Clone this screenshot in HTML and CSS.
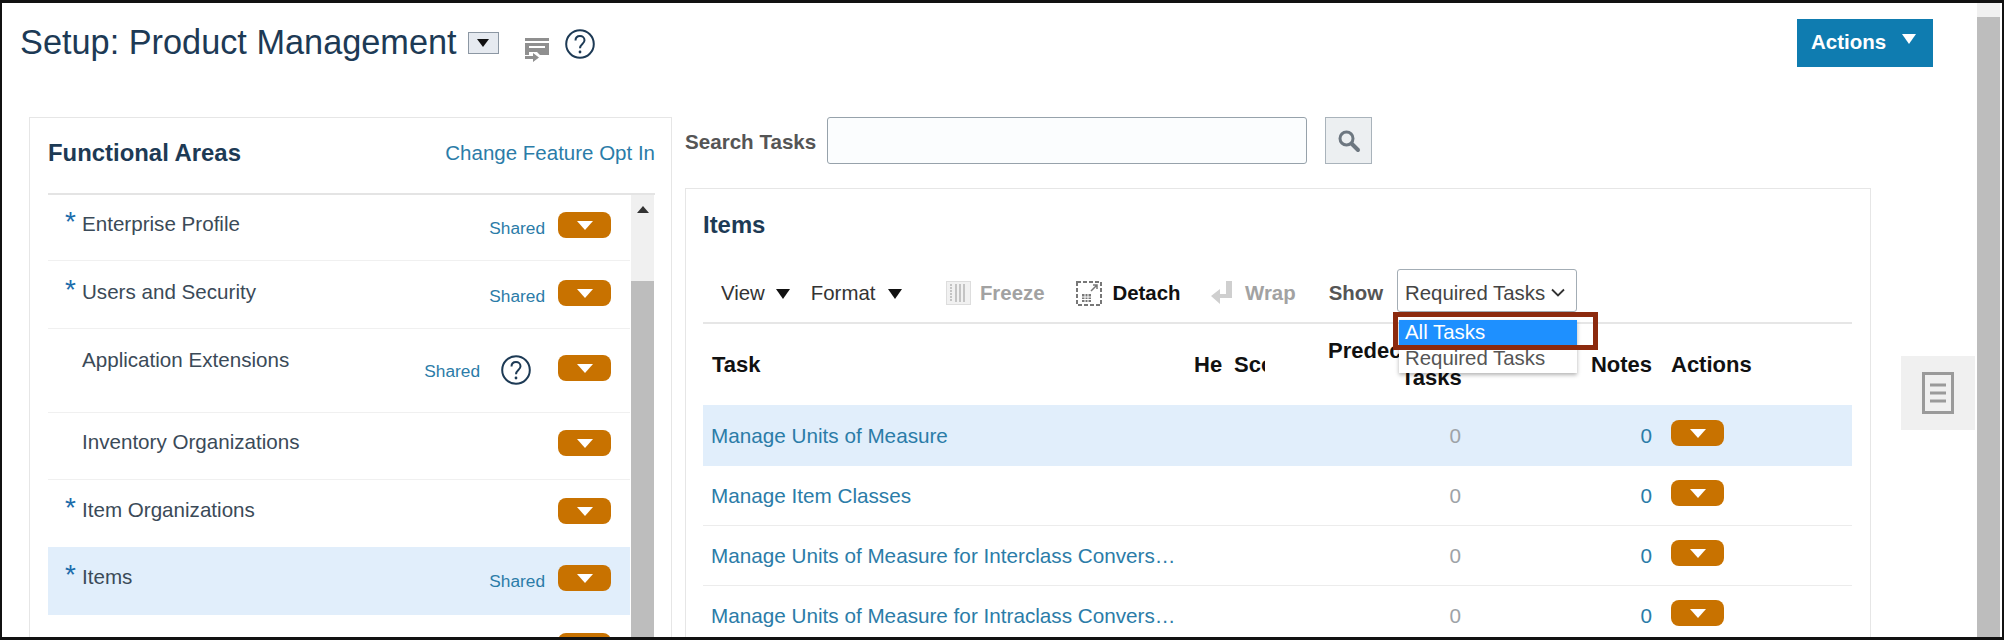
FILE: index.html
```html
<!DOCTYPE html>
<html lang="en">
<head>
<meta charset="utf-8">
<title>Setup: Product Management</title>
<link rel="stylesheet" href="styles.css">
</head>
<body>
<div class="frame">
  <div class="main">
    <header class="page-head">
      <h1 class="page-title">Setup: Product Management</h1>
      <span class="title-drop"><i class="tri tri-black-sm"></i></span>
      <svg class="tray-icon" width="26" height="24" viewBox="0 0 26 24"><path fill="#8f8f8f" d="M1 0h24v3H1zM1 5h24v12h-9l-3-3H5v3H1z"/><path fill="#fff" d="M5 8h16v2H5z"/><path fill="#8f8f8f" d="M1 18h8v-3l6 4.500-6 4.500v-3H1z"/></svg>
      <svg class="help-icon" width="30" height="30" viewBox="0 0 30 30"><circle cx="15" cy="15" r="13.800" fill="none" stroke="#1d3a55" stroke-width="2"/><path fill="none" stroke="#1d3a55" stroke-width="2" d="M10.500 11.500c0-3 2-4.500 4.500-4.500s4.500 1.700 4.500 4.300c0 3.700-4.500 3.700-4.500 8"/><circle cx="15" cy="23" r="1.400" fill="#1d3a55"/></svg>
      <button class="actions-btn">Actions<i class="tri tri-white"></i></button>
    </header>
    <div class="content">
      <section class="areas">
        <div class="areas-head">
          <h2 class="panel-title">Functional Areas</h2>
          <a class="link opt-in">Change Feature Opt In</a>
        </div>
        <div class="areas-body">
          <div class="area-list">
            <div class="area r1"><span class="star">*</span><span class="area-name">Enterprise Profile</span><span class="shared">Shared</span><span class="menu-btn"></span></div>
            <div class="area r2"><span class="star">*</span><span class="area-name">Users and Security</span><span class="shared">Shared</span><span class="menu-btn"></span></div>
            <div class="area r3"><span class="star"></span><span class="area-name">Application Extensions</span><span class="shared">Shared</span>
              <svg class="row-help" width="30" height="30" viewBox="0 0 30 30"><circle cx="15" cy="15" r="13.800" fill="none" stroke="#1d3a55" stroke-width="2"/><path fill="none" stroke="#1d3a55" stroke-width="2" d="M10.500 11.500c0-3 2-4.500 4.500-4.500s4.500 1.700 4.500 4.300c0 3.700-4.500 3.700-4.500 8"/><circle cx="15" cy="23" r="1.400" fill="#1d3a55"/></svg>
              <span class="menu-btn"></span></div>
            <div class="area r4"><span class="star"></span><span class="area-name">Inventory Organizations</span><span class="menu-btn"></span></div>
            <div class="area r5"><span class="star">*</span><span class="area-name">Item Organizations</span><span class="menu-btn"></span></div>
            <div class="area r6 selected"><span class="star">*</span><span class="area-name">Items</span><span class="shared">Shared</span><span class="menu-btn"></span></div>
            <div class="area r7"><span class="star"></span><span class="area-name">Catalogs</span><span class="menu-btn"></span></div>
          </div>
          <div class="list-scroll"><i class="tri tri-up"></i><div class="list-thumb"></div></div>
        </div>
      </section>

      <section class="tasks">
        <div class="search-row">
          <label class="search-label">Search Tasks</label>
          <span class="search-input"></span>
          <button class="search-btn">
            <svg width="24" height="24" viewBox="0 0 24 24"><circle cx="9.500" cy="9.500" r="6.500" fill="none" stroke="#6d7780" stroke-width="3"/><path stroke="#6d7780" stroke-width="4" stroke-linecap="round" d="M15 15l6 6"/></svg>
          </button>
        </div>
        <div class="items">
          <h2 class="panel-title items-title">Items</h2>
          <div class="toolbar">
            <span class="tb-view">View</span><i class="tri tri-black tb-t1"></i>
            <span class="tb-format">Format</span><i class="tri tri-black tb-t2"></i>
            <svg class="tb-freeze" width="25" height="24" viewBox="0 0 25 24"><rect x=".5" y=".5" width="24" height="23" fill="#f1f1f1" stroke="#ddd"/><path stroke="#c4c4c4" stroke-width="2" stroke-dasharray="2 1" d="M5 3v18"/><path stroke="#c4c4c4" stroke-width="2" d="M10 3v18M14 3v18M18 3v18"/></svg>
            <span class="tb-label off tb-freeze-label">Freeze</span>
            <svg class="tb-detach" width="26" height="25" viewBox="0 0 26 25"><rect x="1" y="1" width="24" height="23" fill="none" stroke="#777" stroke-width="2" stroke-dasharray="4 2"/><path fill="none" stroke="#777" stroke-width="1.500" d="M15 10l6-6M17 4h4v4"/><path fill="#777" d="M6 13h9v8H6z"/><path stroke="#fff" d="M6 16h9M6 18.500h9M9 13v8M12 13v8"/></svg>
            <span class="tb-label on">Detach</span>
            <svg class="tb-wrap" width="21" height="24" viewBox="0 0 21 24"><path fill="#cfcfcf" d="M15 0h6v17H9v6L0 15l9-7v5h6z"/></svg>
            <span class="tb-label off tb-wrap-label">Wrap</span>
            <span class="show-label">Show</span>
            <div class="show-select">
              <span class="show-value">Required Tasks</span>
              <svg class="chevron" width="16" height="10" viewBox="0 0 16 10"><path fill="none" stroke="#333" stroke-width="1.800" d="M2 1.500l6 6 6-6"/></svg>
              <ul class="show-menu">
                <li class="opt opt-active">All Tasks</li>
                <li class="opt">Required Tasks</li>
              </ul>
              <span class="callout"></span>
            </div>
          </div>
          <div class="grid grid-head">
            <div class="th th-task">Task</div>
            <div class="th th-he">He</div>
            <div class="th th-sc">Scope</div>
            <div class="th th-pred"><span>Predecessor</span><span class="th-pred2">Tasks</span></div>
            <div class="th th-notes">Notes</div>
            <div class="th">Actions</div>
          </div>
          <div class="grid row selected">
            <a class="link cell-task">Manage Units of Measure</a><span></span><span></span><span class="num">0</span><a class="link num">0</a><span class="menu-btn"></span>
          </div>
          <div class="grid row">
            <a class="link cell-task">Manage Item Classes</a><span></span><span></span><span class="num">0</span><a class="link num">0</a><span class="menu-btn"></span>
          </div>
          <div class="grid row">
            <a class="link cell-task">Manage Units of Measure for Interclass Conversions</a><span></span><span></span><span class="num">0</span><a class="link num">0</a><span class="menu-btn"></span>
          </div>
          <div class="grid row">
            <a class="link cell-task">Manage Units of Measure for Intraclass Conversions</a><span></span><span></span><span class="num">0</span><a class="link num">0</a><span class="menu-btn"></span>
          </div>
        </div>
      </section>

      <aside class="side-handle">
        <svg width="32" height="42" viewBox="0 0 32 42"><rect x="1.500" y="1.500" width="29" height="39" fill="none" stroke="#9a9a9a" stroke-width="3"/><path stroke="#9a9a9a" stroke-width="3" d="M8 13h16M8 21h16M8 29h16"/></svg>
      </aside>
    </div>
  </div>
  <div class="page-scroll"><div class="page-thumb"></div></div>
</div>
</body>
</html>
```

FILE: styles.css
```css
* { box-sizing: border-box; }
html, body { margin: 0; padding: 0; background: #fff; }
body { font-family: "Liberation Sans", Arial, sans-serif; color: #3b4a58; overflow: hidden; }
h1, h2, ul { margin: 0; padding: 0; }
i { display: block; }
button { font-family: inherit; padding: 0; }

.frame {
  width: 2004px; height: 640px; overflow: hidden;
  display: flex;
  border-style: solid; border-color: #111;
  border-width: 3px 2px;
  padding-right: 2px;
}
.main { width: 1975px; flex: none; }

.tri { width: 0; height: 0; border-style: solid; border-color: transparent; }
.tri-white { border-width: 10px 7.500px 0; border-top-color: #fff; }
.tri-black { border-width: 10px 7.500px 0; border-top-color: #111; }
.tri-black-sm { border-width: 8px 6px 0; border-top-color: #111; }
.tri-up { border-width: 0 6px 7px; border-bottom-color: #333; margin: 11px auto 0; }

.page-head { height: 114px; display: flex; align-items: flex-start; padding-left: 18px; }
.page-title { font-weight: 400; font-size: 34.300px; line-height: 40px; color: #1d3a55; margin-top: 19px; white-space: nowrap; }
.title-drop {
  width: 31px; height: 22px; margin: 29px 0 0 11px;
  background: #e6eaf0; border: 1px solid #8c97a3;
  display: flex; align-items: center; justify-content: center;
}
.tray-icon { margin: 35px 0 0 25px; }
.help-icon { margin: 26px 0 0 15px; }
.actions-btn {
  margin: 16px 0 0 auto; margin-right: 44px;
  width: 136px; height: 48px;
  background: #0f7cb0; border: 0; color: #fff;
  font-size: 20.500px; font-weight: 700;
  display: flex; align-items: center; padding: 0 0 3px 14px;
}
.actions-btn .tri { margin: -6px 0 0 16px; }

.content { display: flex; align-items: flex-start; padding-left: 27px; }

.areas { width: 643px; height: 530px; flex: none; border: 1px solid #e6e6e6; padding: 0 16px 0 18px; }
.areas-head { height: 75px; display: flex; justify-content: space-between; align-items: flex-start; padding-top: 20px; }
.panel-title { font-size: 23.900px; font-weight: 700; line-height: 30px; color: #1d3a55; }
.link { color: #2b7ca8; }
.opt-in { font-size: 20.500px; line-height: 30px; }

.areas-body { display: flex; height: 450px; border-top: 2px solid #e4e4e4; }
.area-list { width: 582px; flex: none; }
.area { display: flex; align-items: flex-start; border-bottom: 1px solid #f0f0f0; padding-right: 19px; }
.r1 { height: 66px; padding-top: 17px; }
.r2 { height: 68px; padding-top: 19px; }
.r3 { height: 84px; padding-top: 19px; }
.r4 { height: 67px; padding-top: 17px; }
.r5 { height: 67px; padding-top: 18px; border-bottom: 0; }
.r6 { height: 68px; padding-top: 18px; border-bottom: 0; }
.r7 { height: 68px; padding-top: 18px; border-bottom: 0; }
.r3 .menu-btn { margin-top: 7px; }
.r3 .shared { margin-top: 11px; margin-right: 0; }
.selected { background: #e1eefb; }

.star { width: 34px; padding-left: 17px; font-size: 28px; line-height: 20px; color: #1c6cab; flex: none; }
.area-name { font-size: 20.600px; line-height: 24px; color: #3b4a58; white-space: nowrap; }
.shared { margin: 4px 13px 0 auto; font-size: 17.300px; line-height: 24px; color: #2b7ca8; }
.area-name + .menu-btn { margin-left: auto; }
.menu-btn {
  width: 53px; height: 26px; flex: none;
  background: #c87200; border-radius: 8px;
  display: flex; align-items: center; justify-content: center;
}
.menu-btn::after {
  content: ""; width: 0; height: 0;
  border-style: solid; border-color: #fff transparent transparent;
  border-width: 9px 8.500px 0;
}
.row-help { margin: 7px 27px 0 21px; flex: none; }

.list-scroll { width: 23px; margin-left: 1px; background: #f0f0f0; overflow: hidden; }
.list-thumb { width: 23px; height: 400px; margin-top: 68px; background: #bdbdbd; }

.tasks { width: 1186px; margin-left: 13px; flex: none; }
.search-row { display: flex; align-items: center; height: 47px; }
.search-label { font-size: 20.600px; font-weight: 700; color: #555; white-space: nowrap; margin-top: 2px; }
.search-input { width: 480px; height: 47px; margin-left: 11px; background: #fbfdfe; border: 1px solid #97a2ab; border-radius: 3px; }
.search-btn { width: 47px; height: 47px; margin-left: 18px; background: #eceff1; border: 1px solid #a9b3bb; display: flex; align-items: center; justify-content: center; }

.items { margin-top: 24px; height: 460px; border: 1px solid #e6e6e6; padding: 0 18px 0 17px; }
.items-title { padding-top: 21px; height: 75px; }

.toolbar {
  height: 60px; display: flex; align-items: center;
  border-bottom: 2px solid #e6e6e6;
  padding-left: 18px; font-size: 20.400px; color: #333;
}
.tb-t1 { margin: 1px 0 0 11px; }
.tb-format { margin-left: 21px; }
.tb-t2 { margin: 1px 0 0 13px; }
.tb-freeze { margin-left: 44px; }
.tb-detach { margin-left: 31px; }
.tb-wrap { margin-left: 30.500px; }
.tb-label { font-weight: 700; margin-left: 11px; }
.tb-label.tb-freeze-label { margin-left: 8.500px; }
.tb-label.tb-wrap-label { margin-left: 13px; }
.tb-label.off { color: #a2a2a2; }
.tb-label.on { color: #111; }
.show-label { margin-left: 33px; font-weight: 700; color: #555; }
.show-select {
  position: relative; z-index: 2;
  width: 180px; height: 43px; margin: -5px 0 0 14px;
  border: 1px solid #a3adb5; border-radius: 3px;
  display: flex; align-items: center; padding: 5px 0 0 7px;
  background: #fff;
}
.show-value { color: #444; white-space: nowrap; }
.chevron { margin-left: 5px; }
.show-menu {
  position: absolute; top: 50px; left: 1px; width: 178px; height: 53px;
  list-style: none; background: #fff;
  box-shadow: 0 2px 4px rgba(0, 0, 0, .3);
}
.opt { height: 28px; padding-left: 6px; line-height: 27px; color: #555; white-space: nowrap; }
.opt-active { height: 25px; line-height: 25px; background: #1e90ff; color: #fff; }
.callout {
  position: absolute; top: 42px; left: -5px; width: 205px; height: 38px;
  border: 5px solid #8c2a0e;
}

.grid { display: grid; grid-template-columns: 487px 40px 35px 196px 191px 19px 53px; }
.grid-head { height: 81px; align-items: center; }
.grid-head > :last-child { grid-column: 7; white-space: nowrap; }
.th { font-size: 22px; font-weight: 700; color: #111; line-height: 27px; white-space: nowrap; }
.th-task { padding-left: 9px; }
.th-he { padding-left: 4px; }
.th-sc { padding-left: 4px; overflow: hidden; }
.th-pred { padding-left: 63px; margin-top: -1px; }
.th-pred span { display: block; }
.th-pred .th-pred2 { margin-left: 73px; }
.th-notes { text-align: right; }

.row { height: 60px; border-bottom: 1px solid #ececec; align-items: center; font-size: 20.700px; }
.row.selected { border-bottom: 0; height: 61px; }
.row > .menu-btn { grid-column: 7; margin-top: -5px; }
.cell-task { padding-left: 8px; padding-right: 10px; white-space: nowrap; overflow: hidden; text-overflow: ellipsis; }
.num { text-align: right; color: #9ea3a7; }
.link.num { color: #2b7ca8; }

.side-handle {
  width: 74px; height: 74px; margin: 239px 0 0 30px; flex: none;
  background: #f0f0f0;
  display: flex; align-items: center; justify-content: center;
}

.page-scroll { width: 23px; flex: none; background: #f0f0f0; }
.page-thumb { height: 620px; margin-top: 14px; background: #bdbdbd; }
```
